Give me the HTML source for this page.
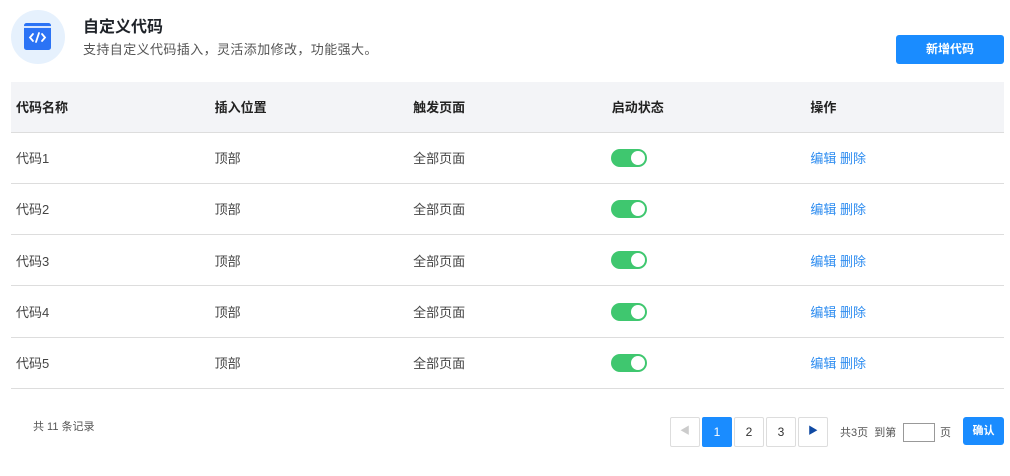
<!DOCTYPE html>
<html><head><meta charset="utf-8"><style>
*{margin:0;padding:0;box-sizing:border-box}
body{width:1010px;height:476px;background:#fff;font-family:"Liberation Sans","Noto Sans CJK SC",sans-serif;color:#333;position:relative;overflow:hidden}
.a{position:absolute}
.icon{left:11px;top:10px;width:54px;height:54px;border-radius:50%;background:#e6f1fd}
.title{left:83px;top:13px;font-size:16px;font-weight:bold;color:#1f2329}
.sub{left:83px;top:39px;font-size:13px;color:#555;letter-spacing:0.4px}
.btn{left:896px;top:35px;width:108px;height:29px;background:#1a8cff;color:#fff;border-radius:3px;font-size:12px;font-weight:bold;text-align:center;line-height:29px}
table{position:absolute;left:11px;top:82px;width:993px;border-collapse:collapse;font-size:13px}
th{background:#f3f4f7;height:50px;text-align:left;font-weight:bold;color:#222;padding-left:5px;border-bottom:1px solid #ddd}
td{height:51.3px;border-bottom:1px solid #ddd;padding-left:5px;color:#444}
th,td{width:199px}
.sw{display:inline-block;width:36px;height:18px;border-radius:9px;background:#3fc76f;position:relative;vertical-align:middle;margin-left:-1px}
.sw:after{content:"";position:absolute;right:2px;top:2px;width:14px;height:14px;border-radius:50%;background:#fff}
.lk{color:#2d8cf0}
.pg{top:417px;width:30px;height:30px;border:1px solid #ddd;border-radius:2px;font-size:12px;text-align:center;line-height:28px;color:#333}
.sm{font-size:11px;color:#555}
</style></head><body>
<div class="a icon"><svg width="54" height="54" viewBox="0 0 54 54"><rect x="13" y="13" width="27" height="27" rx="2.5" fill="#2b73f5"/><rect x="13" y="16" width="27" height="2" fill="#d6e5ff"/><path d="M22 24l-3 3.5 3 3.5M31 24l3 3.5-3 3.5M28 23l-3 9" stroke="#fff" stroke-width="1.8" fill="none" stroke-linecap="round"/></svg></div>
<div class="a title">自定义代码</div>
<div class="a sub">支持自定义代码插入，灵活添加修改，功能强大。</div>
<div class="a btn">新增代码</div>
<table>
<tr><th>代码名称</th><th>插入位置</th><th>触发页面</th><th>启动状态</th><th>操作</th></tr>
<tr><td>代码1</td><td>顶部</td><td>全部页面</td><td><span class="sw"></span></td><td class="lk">编辑 删除</td></tr>
<tr><td>代码2</td><td>顶部</td><td>全部页面</td><td><span class="sw"></span></td><td class="lk">编辑 删除</td></tr>
<tr><td>代码3</td><td>顶部</td><td>全部页面</td><td><span class="sw"></span></td><td class="lk">编辑 删除</td></tr>
<tr><td>代码4</td><td>顶部</td><td>全部页面</td><td><span class="sw"></span></td><td class="lk">编辑 删除</td></tr>
<tr><td>代码5</td><td>顶部</td><td>全部页面</td><td><span class="sw"></span></td><td class="lk">编辑 删除</td></tr>
</table>
<div class="a sm" style="left:33px;top:418px">共 11 条记录</div>
<div class="a pg" style="left:670px;color:#ccc;font-size:10px">◀</div>
<div class="a pg" style="left:702px;background:#1a8cff;border-color:#1a8cff;color:#fff">1</div>
<div class="a pg" style="left:734px">2</div>
<div class="a pg" style="left:766px">3</div>
<div class="a pg" style="left:798px;color:#0f4aa3;font-size:10px">▶</div>
<div class="a sm" style="left:840px;top:424px">共3页&nbsp; 到第</div>
<div class="a" style="left:903px;top:423px;width:32px;height:19px;border:1px solid #999"></div>
<div class="a sm" style="left:940px;top:424px">页</div>
<div class="a" style="left:963px;top:417px;width:41px;height:28px;background:#1a8cff;border-radius:3px;color:#fff;font-size:11px;font-weight:bold;text-align:center;line-height:28px">确认</div>
</body></html>
